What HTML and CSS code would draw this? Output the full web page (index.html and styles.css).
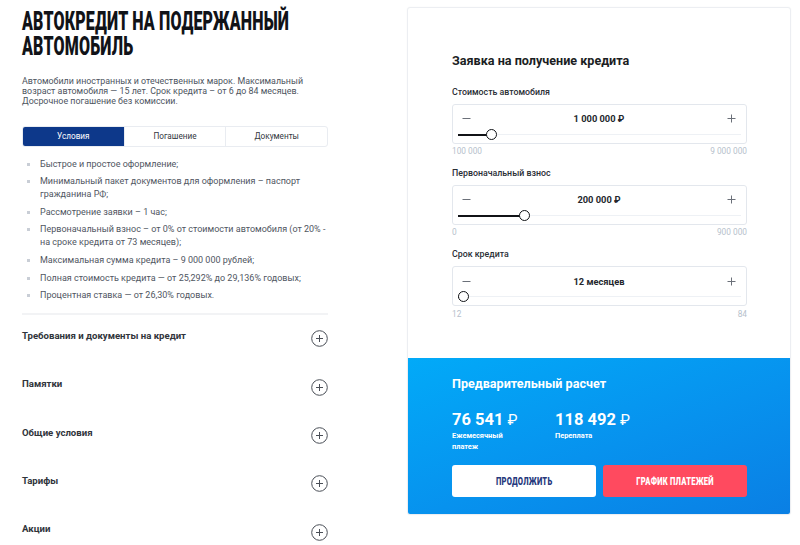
FILE: index.html
```html
<!DOCTYPE html>
<html lang="ru">
<head>
<meta charset="utf-8">
<title>Автокредит на подержанный автомобиль</title>
<link rel="stylesheet" href="styles.css">
</head>
<body>
<main class="page">
  <section class="info">
    <h1 class="title"><span class="title-line">АВТОКРЕДИТ НА ПОДЕРЖАННЫЙ</span><span class="title-line">АВТОМОБИЛЬ</span></h1>
    <p class="lead">Автомобили иностранных и отечественных марок. Максимальный возраст автомобиля — 15 лет. Срок кредита – от 6 до 84 месяцев. Досрочное погашение без комиссии.</p>
    <div class="tabs">
      <div class="tab tab-active">Условия</div>
      <div class="tab">Погашение</div>
      <div class="tab">Документы</div>
    </div>
    <ul class="conds">
      <li>Быстрое и простое оформление;</li>
      <li>Минимальный пакет документов для оформления – паспорт гражданина РФ;</li>
      <li>Рассмотрение заявки – 1 час;</li>
      <li>Первоначальный взнос – от 0% от стоимости автомобиля (от 20% - на сроке кредита от 73 месяцев);</li>
      <li>Максимальная сумма кредита – 9 000 000 рублей;</li>
      <li>Полная стоимость кредита — от 25,292% до 29,136% годовых;</li>
      <li>Процентная ставка — от 26,30% годовых.</li>
    </ul>
    <div class="accordion">
      <div class="acc-item"><span class="acc-title">Требования и документы на кредит</span><svg class="acc-icon" width="17" height="17" viewBox="0 0 17 17"><circle cx="8.5" cy="8.5" r="7.8" fill="none" stroke="#4a4f57" stroke-width="1"/><path d="M8.5 5v7M5 8.5h7" stroke="#4a4f57" stroke-width="1"/></svg></div>
      <div class="acc-item"><span class="acc-title">Памятки</span><svg class="acc-icon" width="17" height="17" viewBox="0 0 17 17"><circle cx="8.5" cy="8.5" r="7.8" fill="none" stroke="#4a4f57" stroke-width="1"/><path d="M8.5 5v7M5 8.5h7" stroke="#4a4f57" stroke-width="1"/></svg></div>
      <div class="acc-item"><span class="acc-title">Общие условия</span><svg class="acc-icon" width="17" height="17" viewBox="0 0 17 17"><circle cx="8.5" cy="8.5" r="7.8" fill="none" stroke="#4a4f57" stroke-width="1"/><path d="M8.5 5v7M5 8.5h7" stroke="#4a4f57" stroke-width="1"/></svg></div>
      <div class="acc-item"><span class="acc-title">Тарифы</span><svg class="acc-icon" width="17" height="17" viewBox="0 0 17 17"><circle cx="8.5" cy="8.5" r="7.8" fill="none" stroke="#4a4f57" stroke-width="1"/><path d="M8.5 5v7M5 8.5h7" stroke="#4a4f57" stroke-width="1"/></svg></div>
      <div class="acc-item"><span class="acc-title">Акции</span><svg class="acc-icon" width="17" height="17" viewBox="0 0 17 17"><circle cx="8.5" cy="8.5" r="7.8" fill="none" stroke="#4a4f57" stroke-width="1"/><path d="M8.5 5v7M5 8.5h7" stroke="#4a4f57" stroke-width="1"/></svg></div>
    </div>
  </section>

  <aside class="calc">
    <div class="calc-form">
      <h2 class="calc-title">Заявка на получение кредита</h2>

      <div class="group">
        <div class="group-label">Стоимость автомобиля</div>
        <div class="field">
          <div class="field-row">
            <svg class="step" width="9" height="9" viewBox="0 0 9 9"><path d="M0.5 4.5h8" stroke="#6b7079" stroke-width="1"/></svg>
            <span class="field-value">1 000 000 ₽</span>
            <svg class="step" width="9" height="9" viewBox="0 0 9 9"><path d="M0.5 4.5h8M4.5 0.5v8" stroke="#6b7079" stroke-width="1"/></svg>
          </div>
          <div class="track"><div class="track-fill" style="width:33.3px"></div><div class="thumb" style="left:33.3px"></div></div>
        </div>
        <div class="range"><span>100 000</span><span>9 000 000</span></div>
      </div>

      <div class="group">
        <div class="group-label">Первоначальный взнос</div>
        <div class="field">
          <div class="field-row">
            <svg class="step" width="9" height="9" viewBox="0 0 9 9"><path d="M0.5 4.5h8" stroke="#6b7079" stroke-width="1"/></svg>
            <span class="field-value">200 000 ₽</span>
            <svg class="step" width="9" height="9" viewBox="0 0 9 9"><path d="M0.5 4.5h8M4.5 0.5v8" stroke="#6b7079" stroke-width="1"/></svg>
          </div>
          <div class="track"><div class="track-fill" style="width:66.6px"></div><div class="thumb" style="left:66.6px"></div></div>
        </div>
        <div class="range"><span>0</span><span>900 000</span></div>
      </div>

      <div class="group">
        <div class="group-label">Срок кредита</div>
        <div class="field">
          <div class="field-row">
            <svg class="step" width="9" height="9" viewBox="0 0 9 9"><path d="M0.5 4.5h8" stroke="#6b7079" stroke-width="1"/></svg>
            <span class="field-value">12 месяцев</span>
            <svg class="step" width="9" height="9" viewBox="0 0 9 9"><path d="M0.5 4.5h8M4.5 0.5v8" stroke="#6b7079" stroke-width="1"/></svg>
          </div>
          <div class="track"><div class="track-fill" style="width:5.5px"></div><div class="thumb" style="left:5.5px"></div></div>
        </div>
        <div class="range"><span>12</span><span>84</span></div>
      </div>
    </div>

    <div class="calc-result">
      <h3 class="result-title">Предварительный расчет</h3>
      <div class="stats">
        <div class="stat stat-first">
          <div class="stat-value">76 541 <span class="rub">₽</span></div>
          <div class="stat-label">Ежемесячный платеж</div>
        </div>
        <div class="stat">
          <div class="stat-value">118 492 <span class="rub">₽</span></div>
          <div class="stat-label">Переплата</div>
        </div>
      </div>
      <div class="buttons">
        <button class="btn btn-light"><span class="btn-text">ПРОДОЛЖИТЬ</span></button>
        <button class="btn btn-red"><span class="btn-text">ГРАФИК ПЛАТЕЖЕЙ</span></button>
      </div>
    </div>
  </aside>
</main>
</body>
</html>
```

FILE: styles.css
```css
* { box-sizing: border-box; }

html, body {
  margin: 0;
  padding: 0;
  background: #ffffff;
  font-family: Roboto, "Liberation Sans", Arial, sans-serif;
  color: #2b2f36;
}

.page {
  display: flex;
  align-items: flex-start;
  gap: 79px;
  padding-left: 22px;
  width: 800px;
  height: 545px;
  overflow: hidden;
}

/* ---------- left column ---------- */
.info {
  width: 306px;
  flex: none;
}

.title {
  margin: 9px 0 0;
  font-size: 25px;
  line-height: 25px;
  font-weight: 900;
  color: #111318;
  white-space: nowrap;
  height: 50px;
}

.title-line {
  display: block;
  width: max-content;
  height: 25px;
  transform: scaleX(0.64);
  transform-origin: left top;
  letter-spacing: 0.3px;
}

.lead {
  margin: 17px 0 0;
  font-size: 8.9px;
  line-height: 10px;
  color: #4d5460;
}

.tabs {
  display: flex;
  margin-top: 19.5px;
  height: 21px;
  border: 1px solid #e9ecf1;
  border-radius: 3px;
  overflow: hidden;
}

.tab {
  flex: 1;
  display: flex;
  align-items: center;
  justify-content: center;
  font-size: 8.2px;
  color: #33373e;
  border-left: 1px solid #e9ecf1;
}

.tab:first-child { border-left: 0; }

.tab-active {
  background: #0d388a;
  color: #ffffff;
}

.conds {
  list-style: none;
  margin: 11px 0 0;
  padding: 0 0 0 18px;
}

.conds li {
  position: relative;
  font-size: 9px;
  line-height: 12.6px;
  color: #50565f;
  margin-bottom: 5.2px;
}

.conds li::before {
  content: "";
  position: absolute;
  left: -13px;
  top: 5px;
  width: 3px;
  height: 3px;
  background: #c9ced6;
}

.accordion {
  margin-top: 11px;
  border-top: 2px solid #f2f3f5;
  padding-top: 14px;
}

.acc-item {
  display: flex;
  justify-content: space-between;
  align-items: flex-start;
  height: 48.3px;
}

.acc-title {
  font-size: 9.6px;
  line-height: 14px;
  font-weight: 700;
  color: #30343b;
}

.acc-icon {
  display: block;
  margin-top: 1.5px;
  flex: none;
}

/* ---------- right card ---------- */
.calc {
  width: 384px;
  flex: none;
  margin-top: 7px;
  border: 1px solid #eceef2;
  border-radius: 3px;
  overflow: hidden;
  background: #ffffff;
  box-shadow: 0 0 2px rgba(0, 0, 0, 0.04);
}

.calc-form {
  padding: 45px 43px 39px 44px;
}

.calc-title {
  margin: 0 0 17.5px;
  font-size: 12.6px;
  line-height: 16px;
  font-weight: 700;
  color: #1b1e23;
}

.group + .group { margin-top: 11.8px; }

.group-label {
  font-size: 8.8px;
  line-height: 11px;
  font-weight: 500;
  color: #2a2e35;
}

.field {
  margin-top: 6.2px;
  height: 40px;
  border: 1px solid #e3e7ed;
  border-radius: 3px;
  padding: 6px 5px 0;
}

.field-row {
  display: flex;
  align-items: center;
  justify-content: space-between;
  height: 16px;
  padding: 0 5px 0 4px;
}

.step { display: block; flex: none; }

.field-value {
  font-size: 9.3px;
  font-weight: 700;
  color: #24272d;
}

.track {
  position: relative;
  height: 1px;
  margin-top: 7.5px;
  background: #eef1f5;
}

.track-fill {
  height: 2px;
  margin-top: -0.5px;
  background: #111317;
}

.thumb {
  position: absolute;
  top: 0.5px;
  width: 11px;
  height: 11px;
  margin: -5.5px 0 0 -5.5px;
  border: 1.6px solid #111317;
  border-radius: 50%;
  background: #ffffff;
}

.range {
  display: flex;
  justify-content: space-between;
  margin-top: 2.3px;
  font-size: 8.3px;
  line-height: 10px;
  color: #b6bfcc;
}

/* ---------- result ---------- */
.calc-result {
  background: linear-gradient(160deg, #02aaf8 0%, #0792ee 55%, #0a7fe4 100%);
  padding: 18px 43px 17px 44px;
  color: #ffffff;
}

.result-title {
  margin: 0;
  font-size: 12.6px;
  line-height: 16px;
  font-weight: 700;
}

.stats {
  display: flex;
  margin-top: 18px;
}

.stat-first { width: 103px; }

.stat-value {
  font-size: 16.5px;
  line-height: 20px;
  font-weight: 700;
  white-space: nowrap;
}

.rub {
  font-weight: 400;
  font-size: 15px;
}

.stat-label {
  max-width: 72px;
  font-size: 7.4px;
  line-height: 11.3px;
  font-weight: 700;
}

.buttons {
  display: flex;
  gap: 7px;
  margin-top: 13px;
}

.btn {
  flex: 1;
  height: 32px;
  border: 0;
  border-radius: 3px;
  padding: 0;
  display: flex;
  align-items: center;
  justify-content: center;
  font-family: Roboto, "Liberation Sans", Arial, sans-serif;
  font-size: 10px;
  font-weight: 900;
  cursor: pointer;
}

.btn-text {
  display: inline-block;
  transform: scaleX(0.76);
  letter-spacing: 0.3px;
}

.btn-light {
  background: #ffffff;
  color: #27397d;
}

.btn-red {
  background: #ff4a5f;
  color: #ffffff;
}
```
